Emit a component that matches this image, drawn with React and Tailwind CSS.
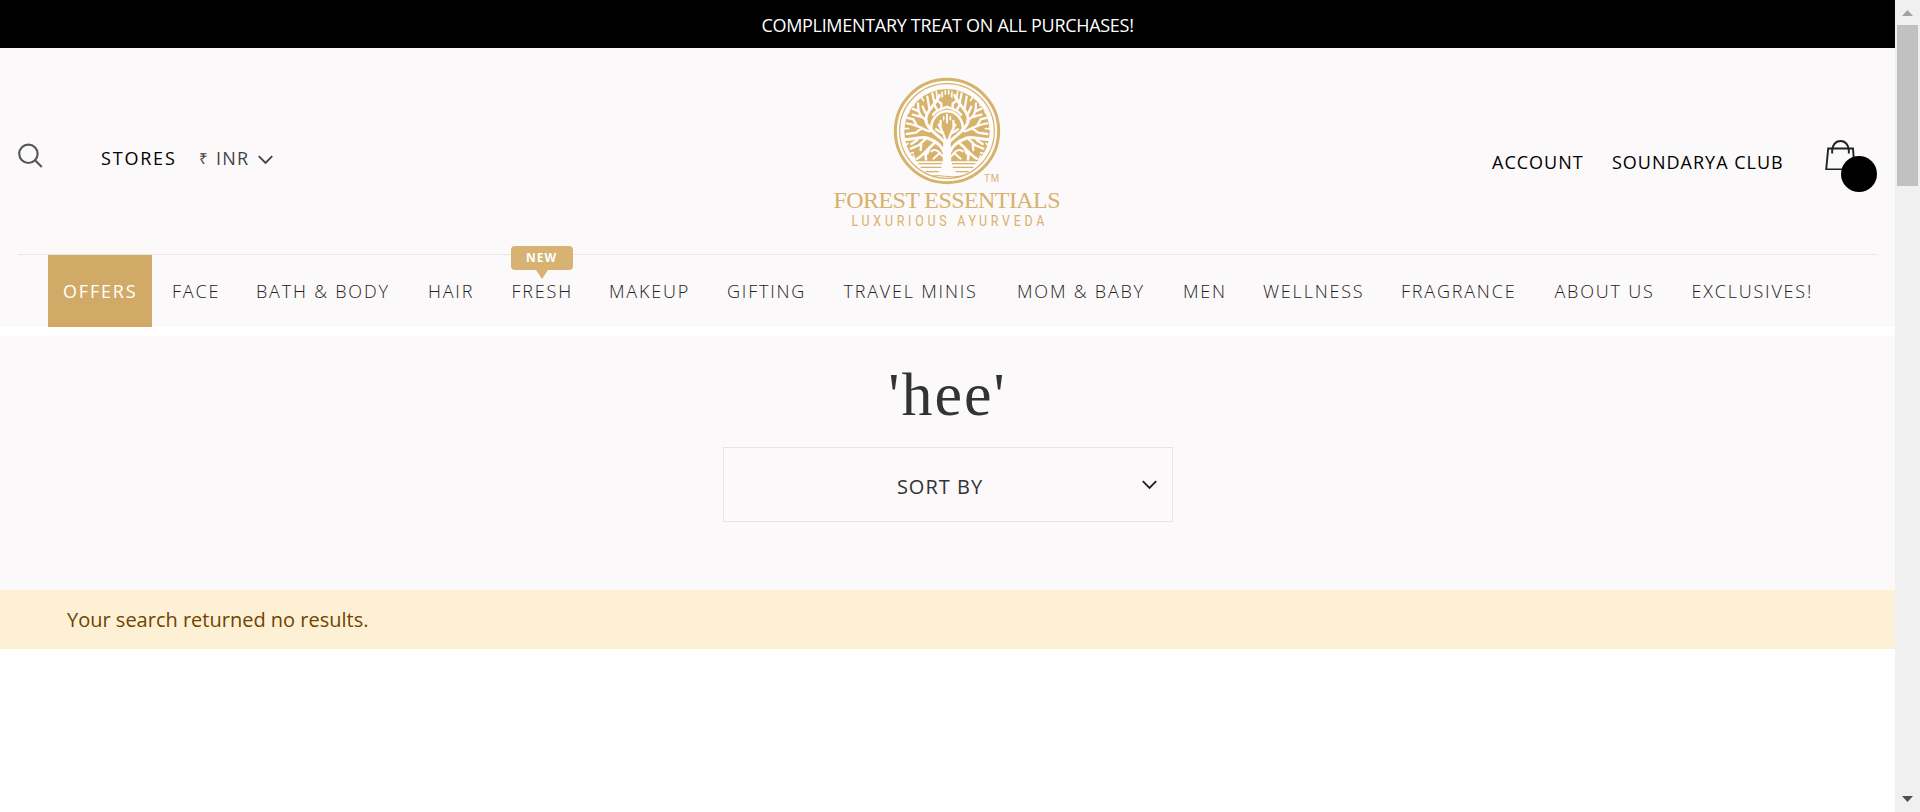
const NAV = [
  ["FACE", "w-[84px]"],
  ["BATH & BODY", "w-[172px]"],
  ["HAIR", "w-[83.5px]"],
  ["FRESH", "w-[97.5px]"],
  ["MAKEUP", "w-[118px]"],
  ["GIFTING", "w-[116.5px]"],
  ["TRAVEL MINIS", "w-[173.5px]"],
  ["MOM & BABY", "w-[166px]"],
  ["MEN", "w-[80px]"],
  ["WELLNESS", "w-[138px]"],
  ["FRAGRANCE", "w-[153.5px]"],
  ["ABOUT US", "w-[137px]"],
  ["EXCLUSIVES!", "w-[130px]"],
];

function HalfTree() {
  return (
    <g fill="none" stroke="#fdfbfb" strokeLinecap="round">
      <path d="M158 232C150 208 128 194 106 186C86 180 66 192 40 190" strokeWidth="9" />
      <path d="M164 205C146 180 112 168 102 138C96 108 128 92 142 58" strokeWidth="9" />
      <path d="M117 164C116 126 140 106 166 105" strokeWidth="8" />
      <path d="M160 190C152 168 148 158 140 146M148 170L132 160M145 157L146 135" strokeWidth="7" />
      <path d="M165 116V140M155 122V131" strokeWidth="5" />
      <path d="M104 134C84 122 78 110 78 82M92 124L62 116M80 106L62 98M101 112L92 92M112 98L106 62M127 80L121 52" strokeWidth="7" />
      <path d="M112 166C88 158 76 146 44 142M90 156L72 170L44 174M74 148L64 130L48 126" strokeWidth="7" />
      <path d="M102 188L80 208L56 218M88 200L86 222M76 192L58 204" strokeWidth="7" />
      <path d="M130 200C112 212 98 234 76 248M112 216L106 232M100 230L102 250" strokeWidth="8" />
      <path d="M155 244C140 226 132 216 118 226M144 230L124 248" strokeWidth="6" />
      <path d="M165 93C150 97 132 102 123 116M148 96V82M135 101L128 88M146 82L137 74" strokeWidth="7" />
      <path d="M152 72L150 48M160 55V44M135 64L133 46M95 74L88 64M66 88L60 82M50 110L42 106" strokeWidth="5" />
      <path d="M37 158H50M38 211L48 202M51 234L64 230M70 252L64 239" strokeWidth="5" />
    </g>
  );
}

function Logo() {
  return (
    <svg width="250" height="170" viewBox="0 0 250 170" className="block" aria-label="Forest Essentials">
      <g transform="translate(72 10) scale(.33333)">
        <circle cx="165" cy="165" r="155" fill="#fdfbfb" stroke="#d7b26a" strokeWidth="9" />
        <circle cx="165" cy="165" r="142" fill="none" stroke="#d7b26a" strokeWidth="3.5" />
        <path d="M73 256A128 128 0 1 1 257 256Z" fill="#d7b26a" />
        <HalfTree />
        <g transform="translate(330 0) scale(-1 1)"><HalfTree /></g>
        <path d="M165 142L155 158L165 178L175 158Z" fill="#d7b26a" />
        <path d="M165 52L142 74H154V82H176V74H188Z" fill="#d7b26a" />
        <path d="M154 190H176L178 278Q180 291 196 294H134Q150 291 152 278Z" fill="#fdfbfb" />
        <path d="M80 263H150M180 263H250M86 274H148M182 274H244M100 287H140M190 287H230" stroke="#d7b26a" strokeWidth="4" />
        <path d="M118 300Q140 297 160 301T212 300" stroke="#d7b26a" strokeWidth="3" fill="none" />
      </g>
      <g fill="#d7b26a">
        <text x="164" y="116" fontFamily="Liberation Sans" fontSize="10" textLength="15">TM</text>
        <text x="13.5" y="142" fontFamily="Liberation Serif" fontSize="24" textLength="227" lengthAdjust="spacing">FOREST ESSENTIALS</text>
        <text transform="translate(31.5 160) scale(.8 1)" fontFamily="Roboto" fontSize="15.5" textLength="241" lengthAdjust="spacing">LUXURIOUS AYURVEDA</text>
      </g>
    </svg>
  );
}

function Chevron({ className }) {
  return (
    <svg viewBox="0 0 15 10" width="15" height="10" fill="none" stroke="currentColor" strokeWidth="1.9" className={className}>
      <path d="M.8 1.2L7.5 8L14.2 1.2" />
    </svg>
  );
}

function Header() {
  return (
    <header className="flex h-[279px] flex-col bg-[#fbf9fa]">
      <div className="mx-[18px] flex h-[207px] items-start justify-between border-b border-[#e8e6e7]">
        <div className="flex w-[802px] pt-[95px]">
          <svg width="25" height="25" viewBox="0 0 25 25" fill="none" stroke="#58585a" strokeWidth="2.2">
            <circle cx="10.4" cy="10.8" r="9.2" />
            <path d="M17 17.2L23.8 24" />
          </svg>
          <span className="ml-[58px] mt-[3px] w-[98px] whitespace-nowrap text-[18px] leading-6 tracking-[1.8px] text-black">STORES</span>
          <span className="mt-[3px] flex text-[18px] leading-6 tracking-[1.2px] text-[#444]">
            <span className="w-[17px] text-[15px]">₹</span>
            <span className="w-[42px]">INR</span>
            <Chevron className="mt-[9px]" />
          </span>
        </div>
        <div className="w-[250px] pt-[18px]"><Logo /></div>
        <div className="flex w-[807px] justify-end pt-[90px] text-[18px] leading-6 tracking-[1px] text-black">
          <span className="mt-[12px] w-[120px] whitespace-nowrap">ACCOUNT</span>
          <span className="mt-[12px] w-[213px] whitespace-nowrap">SOUNDARYA CLUB</span>
          <div className="relative h-[54px] w-[52px]">
            <svg width="31" height="32" viewBox="0 0 31 32" fill="none" stroke="#222" strokeWidth="1.9">
              <path d="M3.2 10.5H28L29.5 31.5H1.2Z" />
              <path d="M7.2 15.5C6.6 7 10.5 3 15.5 3S24.4 7 23.8 15.5" />
            </svg>
            <span className="absolute left-[16px] top-[18px] h-9 w-9 rounded-full bg-black" />
          </div>
        </div>
      </div>
      <nav className="flex h-[72px] pl-[48px] text-[18px] leading-[72px] tracking-[1.8px] text-[#222]">
        <a className="mr-[20px] w-[104px] bg-[#d2aa67] pl-[15px] font-normal text-white">OFFERS</a>
        {NAV.map(([label, width]) => (
          <a key={label} className={`relative shrink-0 whitespace-nowrap font-light ${width}`}>
            {label}
            {label === "FRESH" && (
              <span className="absolute -left-px -top-[9px] h-6 w-[62px] rounded-[4px] bg-[#d7b272] text-center text-[12px] font-bold leading-6 tracking-[1px] text-white">
                NEW
                <svg width="12" height="9" className="absolute left-[25px] top-6"><path d="M0 0H12L6 9Z" fill="#d7b272" /></svg>
              </span>
            )}
          </a>
        ))}
      </nav>
    </header>
  );
}

export default function App() {
  return (
    <div className="flex h-[812px] w-[1920px] overflow-hidden bg-white font-['Open_Sans',sans-serif]">
      <div className="w-[1895px]">
        <div className="h-12 bg-black text-center text-[18px] font-medium leading-[51px] tracking-[-0.3px] text-white">COMPLIMENTARY TREAT ON ALL PURCHASES!</div>
        <Header />
        <main className="mt-[9px]">
          <section className="flex h-[254px] flex-col items-center bg-[#fbf9fa]">
            <h1 className="h-[111px] pt-[21px] font-['Liberation_Serif',serif] text-[62px] leading-[74px] tracking-[2px] text-[#333]">'hee'</h1>
            <div className="flex h-[75px] w-[450px] items-center justify-center border border-[#e6e5e6] text-[20px] tracking-[1px] text-[#333]">
              <span className="w-[15px]" />
              <span className="flex-1 pt-[5px] text-center">SORT BY</span>
              <Chevron className="mr-[15px] text-[#222]" />
            </div>
          </section>
          <p className="h-[59px] bg-[#fdf0d5] pl-[67px] text-[20px] leading-[59px] text-[#6f4400]">Your search returned no results.</p>
        </main>
      </div>
      <div className="flex w-[25px] flex-col items-center bg-[#f0f0f0]">
        <svg width="11" height="25" className="shrink-0"><path d="M0 16L5.5 10L11 16Z" fill="#a3a3a3" /></svg>
        <div className="h-[161px] w-[21px] bg-[#c1c1c1]" />
        <svg width="11" height="25" className="mt-auto shrink-0"><path d="M0 9L5.5 15L11 9Z" fill="#505050" /></svg>
      </div>
    </div>
  );
}
